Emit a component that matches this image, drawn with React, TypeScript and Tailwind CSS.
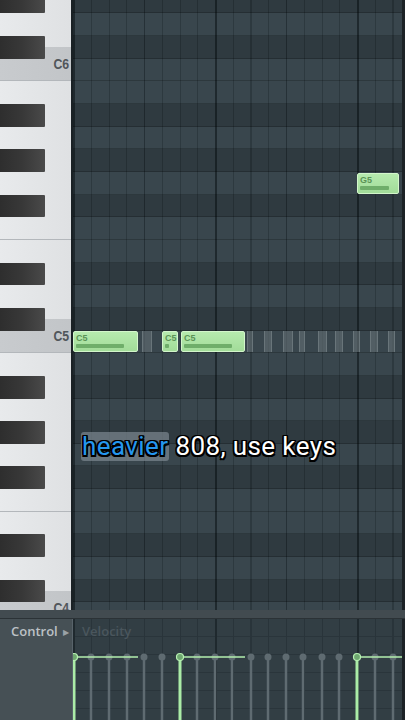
import React from "react";

const pcs = ["D#", "D", "C#", "C", "B", "A#", "A", "G#", "G", "F#", "F", "E"];
const rows = Array.from({ length: 28 }, (_, i) => pcs[i % 12].includes("#"));

// white keys top -> bottom, heights in rows (0.5 / 1.5 / 2)
const whiteKeys: { label?: string; size: "half" | "mid" | "full"; c?: boolean; line?: boolean }[] = [
  { size: "half" },
  { size: "full" },
  { label: "C6", size: "mid", c: true, line: true },
  { size: "mid" },
  { size: "full" },
  { size: "full" },
  { size: "mid", line: true },
  { size: "mid" },
  { size: "full" },
  { label: "C5", size: "mid", c: true, line: true },
  { size: "mid" },
  { size: "full" },
  { size: "full" },
  { size: "mid", line: true },
  { size: "mid" },
  { size: "full" },
  { label: "C4", size: "mid", c: true, line: true },
];

const keyH = { half: "h-[11.33px]", mid: "h-[34px]", full: "h-[45.33px]" };

const ghosts = [
  [69, 10], [174, 6], [191, 8], [210, 10], [226, 6], [245, 9], [262, 8], [280, 7], [297, 8], [315, 7],
];

function Note({ left, top, width, label, bar }: { left: number; top: number; width: number; label: string; bar: number }) {
  return (
    <div
      className="absolute h-[21px] rounded-[2px] border border-[#d3f6cb] bg-gradient-to-b from-[#b6eaae] to-[#a2dc99] flex flex-col justify-between px-[2px] pt-[1px] pb-[3px]"
      style={{ left, top, width }}
    >
      <span className="text-[9px] leading-[10px] font-bold text-[#5b9356] [font-family:'Liberation_Sans',sans-serif]">{label}</span>
      <div className="h-[4px] bg-[#6fae6a] rounded-[1px]" style={{ width: bar }} />
    </div>
  );
}

const greyStems = [18, 36, 54, 71, 89, 124, 142, 159, 178, 195, 213, 230, 249, 266, 302, 320];
const greenStems = [1, 107, 284];

export default function App() {
  return (
    <div className="w-[405px] h-[720px] overflow-hidden flex flex-col bg-[#2e383d] [font-family:'Open_Sans',sans-serif]">
      {/* piano roll */}
      <div className="h-[610px] flex overflow-hidden">
        {/* keyboard */}
        <div className="w-[71px] relative overflow-hidden bg-[#e6e8ea]">
          <div className="flex flex-col mt-[-9.3px]">
            {whiteKeys.map((k, i) => (
              <div
                key={i}
                className={`${keyH[k.size]} flex-shrink-0 flex items-center justify-end pr-[2px] ${k.c ? "bg-gradient-to-r from-[#c8cbce] to-[#c2c5c8]" : "bg-gradient-to-r from-[#e8eaec] to-[#dfe1e3]"} ${k.line ? "border-b border-[#b3b7bb]" : ""}`}
              >
                {k.label && (
                  <span className="text-[15px] font-bold text-[#51565b] scale-x-[0.82] origin-right [font-family:'Liberation_Sans',sans-serif] leading-none">
                    {k.label}
                  </span>
                )}
              </div>
            ))}
          </div>
          <div className="absolute inset-0 flex flex-col mt-[-9.3px]">
            {rows.map((black, i) => (
              <div key={i} className="h-[22.67px] flex-shrink-0">
                {black && <div className="w-[45px] h-full bg-gradient-to-r from-[#2e2e2e] via-[#383838] to-[#4a4a4a] rounded-r-[1px]" />}
              </div>
            ))}
          </div>
        </div>
        <div className="w-[2px] bg-[#1a2125]" />
        {/* grid */}
        <div className="flex-1 relative overflow-hidden bg-[#39464d] bg-[image:repeating-linear-gradient(90deg,#1f292e_0px,#1f292e_1.5px,transparent_1.5px,transparent_142px),repeating-linear-gradient(90deg,#263137_0px,#263137_1px,transparent_1px,transparent_71px),repeating-linear-gradient(90deg,#2d393f_0px,#2d393f_1px,transparent_1px,transparent_17.75px)]">
          <div className="flex flex-col mt-[-9.3px]">
            {rows.map((black, i) => (
              <div key={i} className={`h-[22.67px] flex-shrink-0 border-b border-black/20 ${black ? "bg-black/[0.17]" : ""}`} />
            ))}
          </div>
          {ghosts.map(([l, w], i) => (
            <div key={i} className="absolute top-[331px] h-[21px] bg-[#5d686e]/70 border-x border-[#6f7a80]/80" style={{ left: l, width: w }} />
          ))}
          <Note left={0} top={331} width={65} label="C5" bar={48} />
          <Note left={89} top={331} width={16} label="C5" bar={4} />
          <Note left={108} top={331} width={64} label="C5" bar={48} />
          <Note left={284} top={173} width={42} label="G5" bar={29} />
          {/* caption */}
          <div className="absolute left-[8px] top-[432px] flex items-center text-[26px] font-normal leading-[29px] tracking-[0.4px] text-white [font-family:Roboto,sans-serif] [text-shadow:-1.5px_-1.5px_0_#000,1.5px_-1.5px_0_#000,-1.5px_1.5px_0_#000,1.5px_1.5px_0_#000,0_1.5px_0_#000,0_-1.5px_0_#000,1.5px_0_0_#000,-1.5px_0_0_#000]">
            <span className="bg-[#7c8890]/70 rounded-[3px] px-[1px] text-[#2597ee]">heavier</span>
            <span className="ml-[6px]">808, use keys</span>
          </div>
        </div>
        <div className="w-[3px] bg-[#1c2226]" />
      </div>
      {/* scroll bar */}
      <div className="h-[9px] bg-[#424b50] border-b border-[#2b3236]" />
      {/* control */}
      <div className="flex-1 flex">
        <div className="w-[72px] bg-[#465055] flex items-start pt-[3px] pl-[11px]">
          <span className="text-[13px] font-semibold text-[#bcc1c5] leading-[18px]">Control</span>
          <span className="text-[8px] text-[#9aa2a7] ml-[5px] mt-[4px]">▶</span>
        </div>
        <div className="w-[1px] bg-[#58636a]" />
        <div className="flex-1 relative overflow-hidden bg-[#323e44] bg-[image:repeating-linear-gradient(90deg,#1f292e_0px,#1f292e_1.5px,transparent_1.5px,transparent_142px),repeating-linear-gradient(90deg,#29343a_0px,#29343a_1px,transparent_1px,transparent_17.75px),repeating-linear-gradient(180deg,transparent_0px,transparent_17px,#2a353b_17px,#2a353b_18px)]">
          <span className="absolute left-[9px] top-[3px] text-[13px] font-semibold text-[#4a565d] leading-[18px]">Velocity</span>
          <svg width="329" height="101" viewBox="0 0 329 101" className="block">
            {greyStems.map((x) => (
              <g key={x}>
                <line x1={x} y1={38} x2={x} y2={101} stroke="#5f6b71" strokeWidth={2.5} />
                <circle cx={x} cy={38} r={3.5} fill="#5f6b71" />
              </g>
            ))}
            <line x1={1} y1={38} x2={65} y2={38} stroke="#b3efae" strokeWidth={1.5} />
            <line x1={107} y1={38} x2={172} y2={38} stroke="#b3efae" strokeWidth={1.5} />
            <line x1={284} y1={38} x2={329} y2={38} stroke="#b3efae" strokeWidth={1.5} />
            {greenStems.map((x) => (
              <g key={x}>
                <line x1={x} y1={38} x2={x} y2={101} stroke="#abeca7" strokeWidth={3} />
                <circle cx={x} cy={38} r={3.5} fill="#6fa870" stroke="#b8f2b3" strokeWidth={1.2} />
              </g>
            ))}
          </svg>
        </div>
        <div className="w-[3px] bg-[#1c2226]" />
      </div>
    </div>
  );
}
